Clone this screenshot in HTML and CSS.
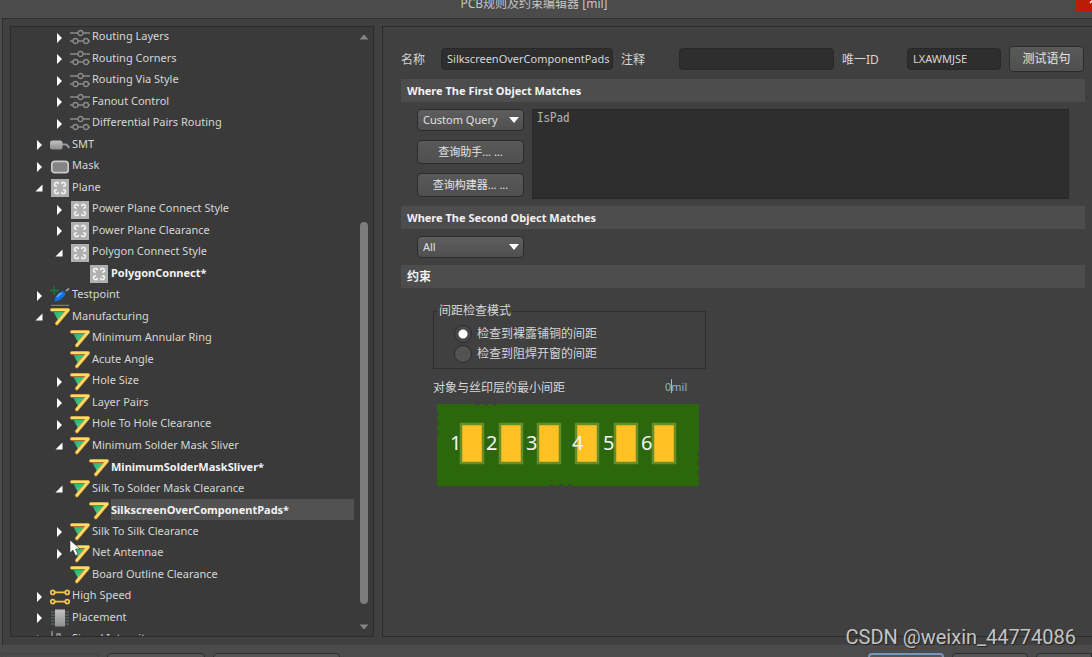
FILE: index.html
```html
<!DOCTYPE html>
<html lang="zh-CN">
<head>
<meta charset="utf-8">
<title>PCB规则及约束编辑器 [mil]</title>
<link rel="stylesheet" href="styles.css">
</head>
<body>
<svg class="defs" aria-hidden="true">
  <defs>
    <linearGradient id="metal" x1="0" y1="0" x2="0" y2="1"><stop offset="0" stop-color="#c2c2c2"/><stop offset="1" stop-color="#8e8e8e"/></linearGradient>
    <linearGradient id="green" x1="0" y1="0" x2="1" y2="1"><stop offset="0" stop-color="#1fae74"/><stop offset="1" stop-color="#6fe08c"/></linearGradient>
  </defs>
  <symbol id="i-closed" viewBox="0 0 10 12"><path d="M3 1v10l5-5z" fill="#fff"/></symbol>
  <symbol id="i-open" viewBox="0 0 10 12"><path d="M8.500 2.500v7H1.500z" fill="#fff"/></symbol>
  <symbol id="i-routing" viewBox="0 0 20 20"><g fill="none" stroke="#8b8b8b" stroke-width="1.300"><path d="M-1 5h9M13 5h8M0 13h3M8 13h5.500M18.500 13H20"/><circle cx="10.500" cy="5" r="2.500"/><circle cx="5.500" cy="13" r="2.500"/><circle cx="16" cy="13" r="2.500"/></g></symbol>
  <symbol id="i-smt" viewBox="0 0 20 20"><rect x="0" y="5.500" width="12.500" height="9" rx="2.500" fill="url(#metal)"/><path d="M12 9.500h3.500q2 0 3.500 3.500" fill="none" stroke="#999" stroke-width="2"/></symbol>
  <symbol id="i-mask" viewBox="0 0 20 20"><rect x="1.800" y="4.300" width="16.400" height="11.400" rx="3" fill="#848484" stroke="#c9c9c9" stroke-width="1.700"/></symbol>
  <symbol id="i-plane" viewBox="0 0 20 20"><rect x="1" y="1" width="18" height="18" fill="#b0b0b0"/><g fill="none" stroke="#f3f3f3" stroke-width="1.600"><path d="M7.500 4.200Q4.200 4.200 4.600 7.500L6.800 8.500M12.500 4.200Q15.800 4.200 15.400 7.500L13.200 8.500M7.500 15.800Q4.200 15.800 4.600 12.500L6.800 11.500M12.500 15.800Q15.800 15.800 15.400 12.500L13.200 11.500M7.500 4.200l1 2M12.500 4.200l-1 2M7.500 15.800l1-2M12.500 15.800l-1-2"/></g></symbol>
  <symbol id="i-test" viewBox="0 0 20 20"><path d="M0 4.500h9M4 0v9" stroke="#15803a" stroke-width="1.300"/><path d="M1 19.300h18" stroke="#8a8a8a"/><path d="M4.500 15.500q-.5-5 6-9.500 3-1.500 4.500.5 1 2-1.500 4.500-4 4-9 4.500z" fill="#0c72e8"/><path d="M7 11q2-3 5-4" stroke="#59aaff" stroke-width="1.500" fill="none"/><path d="M16 5l3-2.500" stroke="#bbb" stroke-width="1.300"/></symbol>
  <symbol id="i-mfg" viewBox="0 0 20 20"><path d="M3.500 5h14L9 15z" fill="url(#green)"/><path d="M1.800 3h16.400L6.800 16.500" fill="none" stroke="#c98325" stroke-width="3.600" stroke-linecap="round" stroke-linejoin="round"/><path d="M1.800 2.800h16.400L6.800 16.300" fill="none" stroke="#ffdc69" stroke-width="2.600" stroke-linecap="round" stroke-linejoin="round"/></symbol>
  <symbol id="i-speed" viewBox="0 0 22 20"><g fill="none" stroke="#f2c445" stroke-width="2"><path d="M5 5h12M5 15h12"/><circle cx="3" cy="5" r="2.200"/><circle cx="19" cy="5" r="2.200"/><circle cx="3" cy="15" r="2.200"/><circle cx="19" cy="15" r="2.200"/></g></symbol>
  <symbol id="i-place" viewBox="0 0 20 20"><path d="M1 4h18M1 7h18M1 10h18M1 13h18M1 16h18" stroke="#65706f" stroke-width="1.200"/><rect x="5" y="1.500" width="10" height="17" fill="url(#metal)"/></symbol>
  <symbol id="i-signal" viewBox="0 0 20 20"><path d="M2 1v18M4 7h3V4h3v6" stroke="#a0a0a0" stroke-width="1.300" fill="none"/></symbol>
  <symbol id="i-down" viewBox="0 0 12 8"><path d="M1 1h10L6 7z" fill="#fff"/></symbol>
</svg>

<header class="titlebar">
  <h1 class="title">PCB规则及约束编辑器 [mil]</h1>
  <button class="close" aria-label="关闭"><svg viewBox="0 0 10 10"><path d="M1 1l8 8M9 1L1 9" stroke="#fff" stroke-width="1.500"/></svg></button>
</header>

<main class="main">
  <nav class="panel nav" aria-label="规则">
    <ul class="tree">
      <li class="row l2"><button class="toggle" aria-label="展开"><svg><use href="#i-closed"/></svg></button><svg class="icon"><use href="#i-routing"/></svg><span class="label">Routing Layers</span></li>
      <li class="row l2"><button class="toggle" aria-label="展开"><svg><use href="#i-closed"/></svg></button><svg class="icon"><use href="#i-routing"/></svg><span class="label">Routing Corners</span></li>
      <li class="row l2"><button class="toggle" aria-label="展开"><svg><use href="#i-closed"/></svg></button><svg class="icon"><use href="#i-routing"/></svg><span class="label">Routing Via Style</span></li>
      <li class="row l2"><button class="toggle" aria-label="展开"><svg><use href="#i-closed"/></svg></button><svg class="icon"><use href="#i-routing"/></svg><span class="label">Fanout Control</span></li>
      <li class="row l2"><button class="toggle" aria-label="展开"><svg><use href="#i-closed"/></svg></button><svg class="icon"><use href="#i-routing"/></svg><span class="label">Differential Pairs Routing</span></li>
      <li class="row l1"><button class="toggle" aria-label="展开"><svg><use href="#i-closed"/></svg></button><svg class="icon"><use href="#i-smt"/></svg><span class="label">SMT</span></li>
      <li class="row l1"><button class="toggle" aria-label="展开"><svg><use href="#i-closed"/></svg></button><svg class="icon"><use href="#i-mask"/></svg><span class="label">Mask</span></li>
      <li class="row l1"><button class="toggle" aria-label="折叠"><svg><use href="#i-open"/></svg></button><svg class="icon"><use href="#i-plane"/></svg><span class="label">Plane</span></li>
      <li class="row l2"><button class="toggle" aria-label="展开"><svg><use href="#i-closed"/></svg></button><svg class="icon"><use href="#i-plane"/></svg><span class="label">Power Plane Connect Style</span></li>
      <li class="row l2"><button class="toggle" aria-label="展开"><svg><use href="#i-closed"/></svg></button><svg class="icon"><use href="#i-plane"/></svg><span class="label">Power Plane Clearance</span></li>
      <li class="row l2"><button class="toggle" aria-label="折叠"><svg><use href="#i-open"/></svg></button><svg class="icon"><use href="#i-plane"/></svg><span class="label">Polygon Connect Style</span></li>
      <li class="row l3"><span class="toggle"></span><svg class="icon"><use href="#i-plane"/></svg><span class="label rule">PolygonConnect*</span></li>
      <li class="row l1"><button class="toggle" aria-label="展开"><svg><use href="#i-closed"/></svg></button><svg class="icon"><use href="#i-test"/></svg><span class="label">Testpoint</span></li>
      <li class="row l1"><button class="toggle" aria-label="折叠"><svg><use href="#i-open"/></svg></button><svg class="icon"><use href="#i-mfg"/></svg><span class="label">Manufacturing</span></li>
      <li class="row l2"><span class="toggle"></span><svg class="icon"><use href="#i-mfg"/></svg><span class="label">Minimum Annular Ring</span></li>
      <li class="row l2"><span class="toggle"></span><svg class="icon"><use href="#i-mfg"/></svg><span class="label">Acute Angle</span></li>
      <li class="row l2"><button class="toggle" aria-label="展开"><svg><use href="#i-closed"/></svg></button><svg class="icon"><use href="#i-mfg"/></svg><span class="label">Hole Size</span></li>
      <li class="row l2"><button class="toggle" aria-label="展开"><svg><use href="#i-closed"/></svg></button><svg class="icon"><use href="#i-mfg"/></svg><span class="label">Layer Pairs</span></li>
      <li class="row l2"><button class="toggle" aria-label="展开"><svg><use href="#i-closed"/></svg></button><svg class="icon"><use href="#i-mfg"/></svg><span class="label">Hole To Hole Clearance</span></li>
      <li class="row l2"><button class="toggle" aria-label="折叠"><svg><use href="#i-open"/></svg></button><svg class="icon"><use href="#i-mfg"/></svg><span class="label">Minimum Solder Mask Sliver</span></li>
      <li class="row l3"><span class="toggle"></span><svg class="icon"><use href="#i-mfg"/></svg><span class="label rule">MinimumSolderMaskSliver*</span></li>
      <li class="row l2"><button class="toggle" aria-label="折叠"><svg><use href="#i-open"/></svg></button><svg class="icon"><use href="#i-mfg"/></svg><span class="label">Silk To Solder Mask Clearance</span></li>
      <li class="row l3"><span class="toggle"></span><svg class="icon"><use href="#i-mfg"/></svg><span class="label rule selected">SilkscreenOverComponentPads*</span></li>
      <li class="row l2"><button class="toggle" aria-label="展开"><svg><use href="#i-closed"/></svg></button><svg class="icon"><use href="#i-mfg"/></svg><span class="label">Silk To Silk Clearance</span></li>
      <li class="row l2"><button class="toggle" aria-label="展开"><svg><use href="#i-closed"/></svg></button><svg class="icon"><use href="#i-mfg"/></svg><span class="label">Net Antennae</span></li>
      <li class="row l2"><span class="toggle"></span><svg class="icon"><use href="#i-mfg"/></svg><span class="label">Board Outline Clearance</span></li>
      <li class="row l1"><button class="toggle" aria-label="展开"><svg><use href="#i-closed"/></svg></button><svg class="icon"><use href="#i-speed"/></svg><span class="label">High Speed</span></li>
      <li class="row l1"><button class="toggle" aria-label="展开"><svg><use href="#i-closed"/></svg></button><svg class="icon"><use href="#i-place"/></svg><span class="label">Placement</span></li>
      <li class="row l1"><button class="toggle" aria-label="展开"><svg><use href="#i-closed"/></svg></button><svg class="icon"><use href="#i-signal"/></svg><span class="label">Signal Integrity</span></li>
    </ul>
    <div class="scrollbar" aria-hidden="true">
      <svg class="arrow" viewBox="0 0 10 6"><path d="M0.500 5.500L5 0.500l4.500 5z" fill="#858585"/></svg>
      <div class="track"><div class="thumb"></div></div>
      <svg class="arrow" viewBox="0 0 10 6"><path d="M0.500 0.500L5 5.500l4.500-5z" fill="#858585"/></svg>
    </div>
  </nav>

  <form class="panel editor">
    <div class="idrow">
      <label class="id-label" for="name">名称</label>
      <input class="field f-name" id="name" value="SilkscreenOverComponentPads">
      <label class="id-label comment" for="comment">注释</label>
      <input class="field f-comment" id="comment">
      <label class="id-label unique" for="uid">唯一ID</label>
      <input class="field f-uid" id="uid" value="LXAWMJSE">
      <button class="btn test" type="button">测试语句</button>
    </div>

    <h2 class="section">Where The First Object Matches</h2>
    <div class="query">
      <div class="query-tools">
        <div class="combo"><select aria-label="第一个对象"><option>Custom Query</option></select><svg><use href="#i-down"/></svg></div>
        <button class="btn" type="button">查询助手... ...</button>
        <button class="btn" type="button">查询构建器... ...</button>
      </div>
      <textarea class="expr" aria-label="查询语句">IsPad</textarea>
    </div>

    <h2 class="section">Where The Second Object Matches</h2>
    <div class="second">
      <div class="combo"><select aria-label="第二个对象"><option>All</option></select><svg><use href="#i-down"/></svg></div>
    </div>

    <h2 class="section cjk">约束</h2>
    <div class="constraints">
      <fieldset class="modes">
        <legend>间距检查模式</legend>
        <label class="mode"><input type="radio" name="mode" checked>检查到裸露铺铜的间距</label>
        <label class="mode"><input type="radio" name="mode">检查到阻焊开窗的间距</label>
      </fieldset>
      <div class="clearance">
        <label for="gap">对象与丝印层的最小间距</label>
        <span class="gap-box"><input class="gap" id="gap" value="0mil"><span class="caret"></span></span>
      </div>
      <svg class="board" viewBox="0 0 262 82" role="img" aria-label="焊盘与丝印示意图">
        <path d="M0 0H38l2 2 3-2h3l3 2 3-2h3l3 2 3-2H262V47l-2 3 2 3v3l-2 3 2 3v3l-2 3 2 3V82H136l-3-2-3 2h-3l-3-2-3 2h-3l-3-2-3 2H0V31l2-3-2-3v-3l2-3-2-3v-3l2-3-2-3z" fill="#2d670b"/>
        <g fill="#ffc222" stroke="#648e2c" stroke-width="2.500">
          <rect x="24" y="20" width="22" height="39"/><rect x="63" y="20" width="22" height="39"/><rect x="101" y="20" width="22" height="39"/><rect x="139" y="20" width="22" height="39"/><rect x="178" y="20" width="22" height="39"/><rect x="216" y="20" width="22" height="39"/>
        </g>
        <g class="pins"><text x="13" y="46">1</text><text x="49" y="46">2</text><text x="89" y="46">3</text><text x="135" y="46">4</text><text x="166" y="46">5</text><text x="204" y="46">6</text></g>
      </svg>
    </div>
  </form>
</main>

<footer class="footer">
  <button class="fbtn w1" aria-label="规则向导"></button>
  <button class="fbtn w2" aria-label="优先级"></button>
  <button class="fbtn w3" aria-label="创建默认规则"></button>
  <span class="spacer"></span>
  <button class="fbtn w4 primary" aria-label="确定"></button>
  <button class="fbtn w4" aria-label="取消"></button>
  <button class="fbtn w5" aria-label="应用"></button>
</footer>

<svg class="cursor" viewBox="0 0 12 18" aria-hidden="true"><path d="M1 1v13l3-3 2.500 5.500 2.500-1L6.500 10H11z" fill="#fff" stroke="#333" stroke-width=".6"/></svg>
<div class="watermark">CSDN @weixin_44774086</div>
</body>
</html>
```
FILE: styles.css
```css
* { box-sizing: border-box; }

body {
  margin: 0;
  height: 100vh;
  display: flex;
  flex-direction: column;
  overflow: hidden;
  background: #4b4b4b;
  color: #d6d6d6;
  font: 11px/20px "Noto Sans", "Noto Sans CJK SC", sans-serif;
}

button, input, select, textarea { font: inherit; color: inherit; }
.defs { position: absolute; width: 0; height: 0; }

.titlebar {
  position: relative;
  flex: none;
  height: 18px;
  overflow: hidden;
}
.title {
  margin: -6px 0 0;
  padding-right: 24px;
  text-align: center;
  font-size: 12px;
  line-height: 20px;
  font-weight: 400;
  color: #c4c4c4;
}
.close {
  position: absolute;
  top: 0;
  right: 0;
  width: 17px;
  height: 11px;
  padding: 0;
  border: 0;
  background: #b91e04;
  overflow: hidden;
}
.close svg { position: absolute; right: -6px; bottom: 7px; width: 9px; height: 9px; }

.main {
  flex: 1;
  min-height: 0;
  display: flex;
  gap: 8px;
  margin-left: 2px;
  padding: 7px 0 8px 7px;
  background: #404040;
  border: solid #2e2e2e;
  border-width: 1px 0 0 1px;
}
.panel { border: 1px solid #2b2b2b; }

.nav {
  flex: none;
  width: 364px;
  display: flex;
  overflow: hidden;
  background: #3a3a3a;
}
.tree {
  flex: 1;
  margin: -2px 0 0;
  padding: 0;
  list-style: none;
}
.row { display: flex; align-items: center; gap: 2px; height: 22px; }
.row:nth-child(even) { height: 21px; }
.l1 { padding-left: 20px; }
.l2 { padding-left: 40px; }
.l3 { padding-left: 59px; }
.toggle {
  flex: none;
  display: flex;
  width: 17px;
  padding: 3px 0 0 3px;
  border: 0;
  background: none;
}
.toggle svg { width: 10px; height: 12px; }
.icon { flex: none; width: 20px; height: 20px; margin-top: 3px; }
.label { flex: 1; line-height: 20px; white-space: nowrap; }
.rule { padding-top: 1px; font-weight: 700; color: #f2f2f2; }
.selected { background: #525252; }

.scrollbar {
  flex: none;
  width: 19px;
  display: flex;
  flex-direction: column;
  align-items: center;
  padding: 7px 0 6px;
}
.arrow { width: 10px; height: 6px; }
.track { flex: 1; display: flex; padding: 182px 0 20px; }
.thumb { width: 8px; border-radius: 4px; background: #7c7c7c; }

.editor {
  flex: 1;
  min-width: 0;
  border-right: 0;
  padding: 18px 7px 0 18px;
}
.idrow { display: flex; align-items: center; height: 27px; }
.id-label { flex: none; width: 40px; padding-top: 3px; font-size: 12px; }
.comment { width: 58px; margin-left: 8px; }
.unique { width: 65px; margin-left: 8px; }
.field {
  min-width: 0;
  height: 22px;
  padding: 0 1px 0 5px;
  border: 1px solid #282828;
  border-radius: 4px;
  background: #2e2e2e;
}
.f-name { flex: 164; }
.f-comment { flex: 147; }
.f-uid { flex: 86; }
.btn {
  height: 24px;
  padding: 0;
  border: 1px solid #2b2b2b;
  border-radius: 4px;
  background: linear-gradient(#595959, #4f4f4f);
  line-height: 20px;
  color: #e4e4e4;
}
.test { flex: none; width: 75px; height: 26px; margin: 0 1px 0 8px; font-size: 12px; }

.section {
  margin: 7px 0;
  padding-left: 6px;
  background: #4d4d4d;
  font-size: 11px;
  line-height: 23px;
  font-weight: 700;
  color: #f2f2f2;
}
.cjk { font-size: 12px; }
.query { display: flex; gap: 8px; padding: 0 16px; }
.query-tools {
  flex: none;
  width: 107px;
  display: flex;
  flex-direction: column;
  gap: 9px;
  padding-bottom: 2px;
}
.combo { position: relative; width: 107px; }
.combo select {
  display: block;
  width: 100%;
  height: 22px;
  padding: 0 5px;
  appearance: none;
  border: 1px solid #2b2b2b;
  border-radius: 4px;
  background: linear-gradient(#5e5e5e, #4f4f4f);
  color: #e0e0e0;
}
.combo svg { position: absolute; top: 7px; right: 4px; width: 12px; height: 8px; pointer-events: none; }
.expr {
  flex: 1;
  min-width: 0;
  padding: 0 4px;
  border: 1px solid #282828;
  border-radius: 0;
  background: #2e2e2e;
  resize: none;
  font-family: "Noto Sans Mono CJK SC", "Liberation Mono", monospace;
  font-size: 13px;
  line-height: 14px;
  color: #b0b0b0;
}
.second { padding: 0 16px; }

.constraints { padding: 8px 0 0 32px; font-size: 12px; }
.modes {
  width: 273px;
  height: 66px;
  margin: 0;
  padding: 5px 0 0 20px;
  border: 1px solid #2f2f2f;
}
.modes legend { margin-left: -17px; padding: 0 2px; line-height: 16px; }
.mode { display: flex; align-items: center; gap: 5px; height: 20px; }
.mode input {
  appearance: none;
  width: 18px;
  height: 18px;
  margin: 0;
  border: 1px solid #2b2b2b;
  border-radius: 50%;
  background: #535353;
}
.mode input:checked { background: radial-gradient(circle, #fff 4px, #484848 5px); }
.clearance { display: flex; width: 273px; height: 35px; padding-top: 9px; }
.clearance label { flex: 1; }
.gap-box { position: relative; width: 41px; }
.gap { display: block; width: 100%; height: 17px; padding: 0; border: 0; background: none; font-size: 11px; color: #8fb0dc; }
.caret { position: absolute; left: 6px; top: 1px; width: 1px; height: 14px; background: #b5b5b5; }
.board { display: block; width: 262px; height: 82px; margin-left: 4px; }
.pins { fill: #f3f3f3; font-size: 20px; }

.footer {
  flex: none;
  display: flex;
  gap: 8px;
  height: 12px;
  padding: 8px 0 0 1px;
  overflow: hidden;
}
.fbtn {
  flex: none;
  height: 26px;
  border: 1px solid #2b2b2b;
  border-radius: 4px;
  background: #555;
}
.w1 { width: 98px; border-color: #424242; background: #4b4b4b; }
.w2 { width: 98px; }
.w3 { width: 127px; }
.w4 { width: 76px; }
.w5 { width: 56px; border-radius: 4px 0 0; }
.primary { border: 2px solid #7595bd; }
.spacer { flex: 1; }

.cursor { position: absolute; left: 69px; top: 539px; width: 12px; height: 18px; }
.watermark {
  position: absolute;
  right: 16px;
  bottom: 8px;
  font: 20px/24px Roboto, sans-serif;
  color: #c4c4c4;
  text-shadow: 1px 1px 1px #222;
}
```
